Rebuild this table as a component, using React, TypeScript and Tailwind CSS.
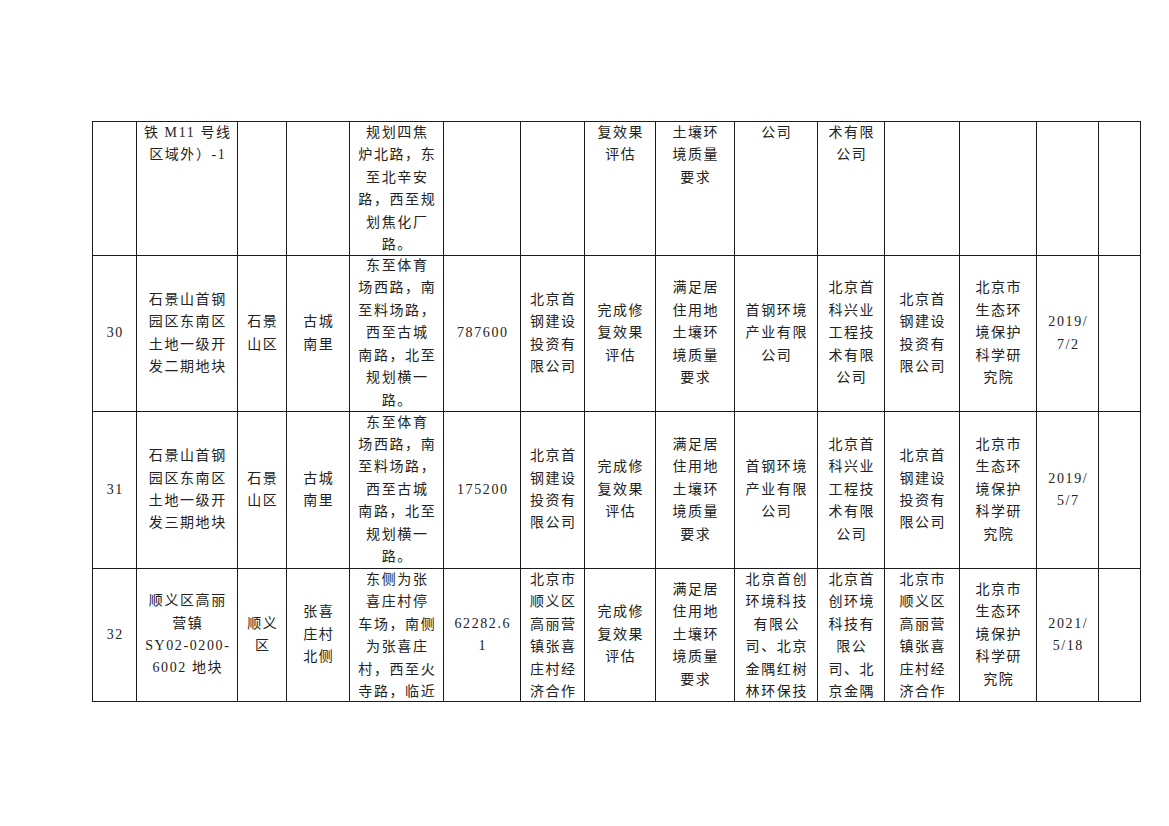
type Cell = { lines: string[]; top?: boolean }

const c = (s: string, top?: boolean): Cell => ({
  lines: s === "" ? [] : s.split("|"),
  top,
})

const rows: Cell[][] = [
  [
    c(""),
    c("铁 M11 号线|区域外）-1", true),
    c(""),
    c(""),
    c("规划四焦|炉北路，东|至北辛安|路，西至规|划焦化厂|路。", true),
    c(""),
    c(""),
    c("复效果|评估", true),
    c("土壤环|境质量|要求", true),
    c("公司", true),
    c("术有限|公司", true),
    c(""),
    c(""),
    c(""),
    c(""),
  ],
  [
    c("30"),
    c("石景山首钢|园区东南区|土地一级开|发二期地块"),
    c("石景|山区"),
    c("古城|南里"),
    c("东至体育|场西路，南|至料场路，|西至古城|南路，北至|规划横一|路。"),
    c("787600"),
    c("北京首|钢建设|投资有|限公司"),
    c("完成修|复效果|评估"),
    c("满足居|住用地|土壤环|境质量|要求"),
    c("首钢环境|产业有限|公司"),
    c("北京首|科兴业|工程技|术有限|公司"),
    c("北京首|钢建设|投资有|限公司"),
    c("北京市|生态环|境保护|科学研|究院"),
    c("2019/|7/2"),
    c(""),
  ],
  [
    c("31"),
    c("石景山首钢|园区东南区|土地一级开|发三期地块"),
    c("石景|山区"),
    c("古城|南里"),
    c("东至体育|场西路，南|至料场路，|西至古城|南路，北至|规划横一|路。"),
    c("175200"),
    c("北京首|钢建设|投资有|限公司"),
    c("完成修|复效果|评估"),
    c("满足居|住用地|土壤环|境质量|要求"),
    c("首钢环境|产业有限|公司"),
    c("北京首|科兴业|工程技|术有限|公司"),
    c("北京首|钢建设|投资有|限公司"),
    c("北京市|生态环|境保护|科学研|究院"),
    c("2019/|5/7"),
    c(""),
  ],
  [
    c("32"),
    c("顺义区高丽|营镇|SY02-0200-|6002 地块"),
    c("顺义|区"),
    c("张喜|庄村|北侧"),
    c("东侧为张|喜庄村停|车场，南侧|为张喜庄|村，西至火|寺路，临近", true),
    c("62282.6|1"),
    c("北京市|顺义区|高丽营|镇张喜|庄村经|济合作", true),
    c("完成修|复效果|评估"),
    c("满足居|住用地|土壤环|境质量|要求"),
    c("北京首创|环境科技|有限公|司、北京|金隅红树|林环保技", true),
    c("北京首|创环境|科技有|限公|司、北|京金隅", true),
    c("北京市|顺义区|高丽营|镇张喜|庄村经|济合作", true),
    c("北京市|生态环|境保护|科学研|究院"),
    c("2021/|5/18"),
    c(""),
  ],
]

export default function App() {
  return (
    <div lang="zh-CN" className="min-h-[826px] w-[1169px] bg-white pl-[92px] pt-[121px]">
      <div
        className="grid w-[1049px] grid-cols-[44px_101px_49px_63px_94px_77px_64px_71px_79px_83px_67px_75px_77px_62px_42px] grid-rows-[134px_156px_157px_133px] border-l border-t border-[#1c1c1c] text-[14px] font-normal leading-[22.4px] tracking-[1.6px] text-[#222] antialiased"
        style={{ fontFamily: '"Liberation Serif", "Noto Sans CJK SC", serif' }}
      >
        {rows.map((row, ri) =>
          row.map((cell, ci) => (
            <div
              key={`${ri}-${ci}`}
              className={
                cell.top
                  ? "flex flex-col items-center justify-start overflow-hidden border-b border-r border-[#1c1c1c] pl-[1.6px] text-center"
                  : "flex flex-col items-center justify-center overflow-hidden border-b border-r border-[#1c1c1c] pl-[1.6px] text-center"
              }
            >
              {cell.lines.map((line, li) => (
                <div key={li} className="whitespace-nowrap">
                  {line}
                </div>
              ))}
            </div>
          ))
        )}
      </div>
    </div>
  )
}
